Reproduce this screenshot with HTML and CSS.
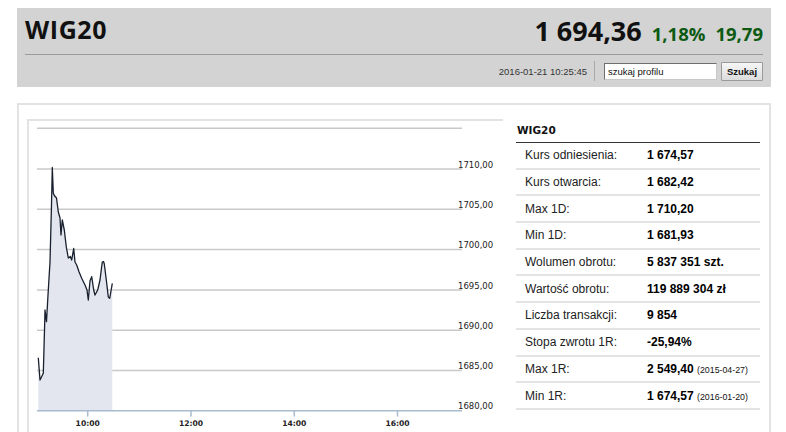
FILE: index.html
```html
<!DOCTYPE html>
<html lang="pl">
<head>
<meta charset="utf-8">
<title>WIG20</title>
<link rel="stylesheet" href="styles.css">
</head>
<body>
<div class="page">
  <header class="quote">
    <div class="quote-top">
      <h1 class="quote-name">WIG20</h1>
      <div class="quote-price">
        <span class="price">1 694,36</span>
        <span class="chg">1,18%</span>
        <span class="chg">19,79</span>
      </div>
    </div>
    <div class="quote-bottom">
      <span class="stamp">2016-01-21 10:25:45</span>
      <span class="vsep"></span>
      <form class="search">
        <input class="search-input" type="text" value="szukaj profilu">
        <button class="search-btn" type="button">Szukaj</button>
      </form>
    </div>
  </header>

  <section class="main">
    <div class="chart">
      <svg class="chart-svg" width="474" height="311" viewBox="29 121 474 311" xmlns="http://www.w3.org/2000/svg">
        <g stroke="#c9c9c9" stroke-width="1.5">
          <line x1="37" y1="128.3" x2="462" y2="128.3"/>
          <line x1="37" y1="169" x2="462" y2="169"/>
          <line x1="37" y1="209.3" x2="462" y2="209.3"/>
          <line x1="37" y1="249.5" x2="462" y2="249.5"/>
          <line x1="37" y1="290" x2="462" y2="290"/>
          <line x1="37" y1="330.2" x2="462" y2="330.2"/>
          <line x1="37" y1="370.5" x2="462" y2="370.5"/>
        </g>
        <path d="M38.3 410.7 L38.3 357.7 L40 380 L41.5 377 L43.3 373.3 L44.5 330 L45 310 L46.5 321.7 L48 295 L50 262 L51.5 205 L52.3 167.5 L53.3 193 L54.3 195.5 L56.5 198 L58.3 212 L60 218 L61 235 L62.3 220 L64.3 230 L66.3 247 L68.3 258 L70.3 256.5 L71.7 260 L73.7 248.5 L75 262 L76.7 265 L79 271.7 L81.7 278.3 L85 285 L87 290 L88.3 300 L90 281 L91.7 276.7 L93.7 290 L95 295 L97.7 290 L100 280 L101.5 268 L102.3 262 L103.5 261.5 L104.3 264 L106.3 280 L108.3 297 L109.7 298.3 L111 291 L112.3 283.3 L112.3 410.7 Z" fill="#e3e6ee"/>
        <polyline fill="none" stroke="#18202e" stroke-width="1.3" stroke-linejoin="round" points="38.3,357.7 40,380 41.5,377 43.3,373.3 44.5,330 45,310 46.5,321.7 48,295 50,262 51.5,205 52.3,167.5 53.3,193 54.3,195.5 56.5,198 58.3,212 60,218 61,235 62.3,220 64.3,230 66.3,247 68.3,258 70.3,256.5 71.7,260 73.7,248.5 75,262 76.7,265 79,271.7 81.7,278.3 85,285 87,290 88.3,300 90,281 91.7,276.7 93.7,290 95,295 97.7,290 100,280 101.5,268 102.3,262 103.5,261.5 104.3,264 106.3,280 108.3,297 109.7,298.3 111,291 112.3,283.3"/>
        <g stroke="#a8bbcf" stroke-width="1.5">
          <line x1="37" y1="410.7" x2="462" y2="410.7"/>
          <line x1="87.7" y1="410.7" x2="87.7" y2="416.5"/>
          <line x1="191" y1="410.7" x2="191" y2="416.5"/>
          <line x1="294.3" y1="410.7" x2="294.3" y2="416.5"/>
          <line x1="397.5" y1="410.7" x2="397.5" y2="416.5"/>
        </g>
        <g class="ylab">
          <text x="458" y="167.5">1710,00</text>
          <text x="458" y="207.8">1705,00</text>
          <text x="458" y="248">1700,00</text>
          <text x="458" y="288.5">1695,00</text>
          <text x="458" y="328.7">1690,00</text>
          <text x="458" y="369">1685,00</text>
          <text x="458" y="409.3">1680,00</text>
        </g>
        <g class="xlab">
          <text x="87.7" y="426">10:00</text>
          <text x="191" y="426">12:00</text>
          <text x="294.3" y="426">14:00</text>
          <text x="397.5" y="426">16:00</text>
        </g>
      </svg>
    </div>

    <div class="stats">
      <h2 class="stats-title">WIG20</h2>
      <div class="row"><span class="lbl">Kurs odniesienia:</span><span class="val">1 674,57</span></div>
      <div class="row"><span class="lbl">Kurs otwarcia:</span><span class="val">1 682,42</span></div>
      <div class="row"><span class="lbl">Max 1D:</span><span class="val">1 710,20</span></div>
      <div class="row"><span class="lbl">Min 1D:</span><span class="val">1 681,93</span></div>
      <div class="row"><span class="lbl">Wolumen obrotu:</span><span class="val">5 837 351 szt.</span></div>
      <div class="row"><span class="lbl">Wartość obrotu:</span><span class="val">119 889 304 zł</span></div>
      <div class="row"><span class="lbl">Liczba transakcji:</span><span class="val">9 854</span></div>
      <div class="row"><span class="lbl">Stopa zwrotu 1R:</span><span class="val">-25,94%</span></div>
      <div class="row"><span class="lbl">Max 1R:</span><span class="val">2 549,40 <small class="date">(2015-04-27)</small></span></div>
      <div class="row"><span class="lbl">Min 1R:</span><span class="val">1 674,57 <small class="date">(2016-01-20)</small></span></div>
    </div>
  </section>
</div>
</body>
</html>
```

FILE: styles.css
```css
html, body {
  margin: 0;
  padding: 0;
  background: #fff;
}
body {
  font-family: "Liberation Sans", Arial, sans-serif;
  color: #222;
  width: 786px;
  height: 432px;
  overflow: hidden;
}

/* ---------- header ---------- */
.quote {
  margin: 8px 0 0 17px;
  width: 754px;
  height: 79px;
  box-sizing: border-box;
  background: #d3d3d3;
  padding: 0 8px;
}
.quote-top {
  height: 46px;
  border-bottom: 1px solid #9b9b9b;
  display: flex;
  justify-content: space-between;
  align-items: flex-start;
}
.quote-name {
  margin: 9px 0 0 0;
  font-family: "Open Sans", sans-serif;
  font-weight: 700;
  font-size: 25px;
  line-height: 25px;
  letter-spacing: 0.6px;
  color: #111;
}
.quote-price {
  margin-top: 9px;
  display: flex;
  align-items: baseline;
  font-family: "Open Sans", sans-serif;
  font-weight: 700;
}
.price {
  font-size: 27px;
  line-height: 27px;
  color: #111;
}
.chg {
  font-size: 18.5px;
  color: #0d5a12;
  margin-left: 10px;
}

.quote-bottom {
  height: 32px;
  display: flex;
  justify-content: flex-end;
  align-items: center;
}
.stamp {
  font-size: 9.5px;
  color: #333;
}
.vsep {
  width: 1px;
  height: 20px;
  background: #a9a9a9;
  margin: 0 9px 0 7px;
}
.search {
  display: flex;
  align-items: center;
  margin: 0;
}
.search-input {
  box-sizing: border-box;
  width: 113px;
  height: 17px;
  margin: 0;
  padding: 0 3px;
  border: 1px solid #6f6f6f;
  border-right-color: #c8c8c8;
  border-bottom-color: #c8c8c8;
  background: #fff;
  font-family: "Liberation Sans", Arial, sans-serif;
  font-size: 9.5px;
  color: #111;
}
.search-btn {
  box-sizing: border-box;
  width: 42px;
  height: 19px;
  margin: 0 0 0 4px;
  padding: 0;
  border: 1px solid #9a9a9a;
  border-radius: 1px;
  background: linear-gradient(#f6f6f6, #dcdcdc);
  font-family: "Liberation Sans", Arial, sans-serif;
  font-weight: 700;
  font-size: 9.5px;
  color: #111;
}

/* ---------- main ---------- */
.main {
  margin: 16px 0 0 17px;
  width: 754px;
  height: 340px;
  box-sizing: border-box;
  border: 2px solid #e3e3e3;
  border-bottom: none;
  display: flex;
  align-items: flex-start;
}
.chart {
  margin: 14px 0 0 8px;
  width: 476px;
  height: 330px;
  box-sizing: border-box;
  border-top: 2px solid #e3e3e3;
  border-left: 2px solid #e3e3e3;
}
.chart-svg {
  display: block;
}
.ylab text {
  font-family: "DejaVu Sans", sans-serif;
  font-size: 8.5px;
  fill: #222;
}
.xlab text {
  font-family: "DejaVu Sans", sans-serif;
  font-size: 7.6px;
  font-weight: 700;
  fill: #222;
  text-anchor: middle;
}

/* ---------- stats ---------- */
.stats {
  margin-left: 13px;
  width: 244px;
}
.stats-title {
  margin: 0;
  padding: 17px 0 4px 1px;
  font-family: "DejaVu Sans", sans-serif;
  font-weight: 700;
  font-size: 10.5px;
  line-height: 16px;
  color: #111;
  border-bottom: 1px solid #333;
}
.row {
  display: flex;
  align-items: center;
  height: 24.7px;
  border-bottom: 2px solid #e4e4e4;
  font-size: 12px;
}
.lbl {
  width: 122px;
  padding-left: 9px;
  color: #222;
}
.val {
  font-weight: 700;
  color: #000;
}
.date {
  font-weight: 400;
  font-size: 8.8px;
  color: #111;
}
```
